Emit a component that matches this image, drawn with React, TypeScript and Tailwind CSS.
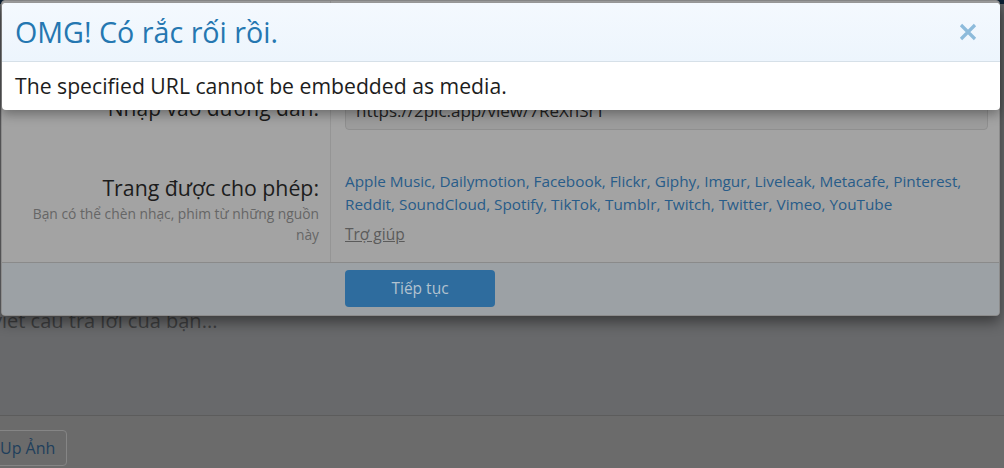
import React from 'react'

const sites = ['Apple Music', 'Dailymotion', 'Facebook', 'Flickr', 'Giphy', 'Imgur', 'Liveleak', 'Metacafe', 'Pinterest', 'Reddit', 'SoundCloud', 'Spotify', 'TikTok', 'Tumblr', 'Twitch', 'Twitter', 'Vimeo', 'YouTube']

export default function App() {
  return (
    <div className="relative w-[1004px] h-[468px] overflow-hidden bg-[#68696b] font-['Open_Sans',sans-serif]">
      {/* page behind overlay */}
      <div className="flex flex-col h-full">
        <div className="h-[4px] bg-[#0b1f33]" />
        <div className="h-[305px]" />
        <div className="h-[106px] text-[20px] text-[#3e3f40] leading-[24px] -ml-[8px]">viết câu trả lời của bạn...</div>
        <div className="flex-1 border-t border-[#5c5c5c] bg-[#6b6b6b] pt-[14px]">
          <button className="-ml-[12px] h-[36px] pl-[11px] pr-[11px] rounded-[4px] border border-[#858585] text-[16px] text-[#1f3f5c]">Up Ảnh</button>
        </div>
      </div>

      {/* dimmed editor modal */}
      <div className="absolute left-[1px] top-[0px] w-[999px] h-[316px] rounded-[4px] border border-[#8c8c8c] bg-[#a3a3a3] shadow-[0_6px_14px_rgba(0,0,0,0.45)] flex flex-col overflow-hidden">
        <div className="flex flex-1">
          <div className="w-[329px] border-r border-[#959595] flex flex-col items-end pr-[11px]">
            <div className="h-[93px]" />
            <div className="text-[21px] leading-[28px] text-[#1c1c1c]">Nhập vào đường dẫn:</div>
            <div className="h-[51px]" />
            <div className="text-[21.3px] leading-[30px] text-[#1c1c1c]">Trang được cho phép:</div>
            <div className="text-[13.8px] leading-[21px] text-[#666666] text-right w-[300px]">Bạn có thể chèn nhạc, phim từ những nguồn này</div>
          </div>
          <div className="flex-1 flex flex-col pl-[14px] pr-[11px]">
            <div className="h-[92px]" />
            <div className="h-[37px] rounded-[4px] border border-[#8f8f8f] bg-[#9c9c9c] px-[10px] text-[17px] leading-[34px] text-[#222]">https://2pic.app/view/7ReXhSrT</div>
            <div className="h-[40px]" />
            <div className="text-[15.3px] leading-[23px] text-[#285c89] pr-[10px]">
              {sites.map((s, i) => (
                <span key={s}>{s}{i < sites.length - 1 ? ', ' : ''}</span>
              ))}
            </div>
            <div className="mt-[8px] text-[15.5px] leading-[21px] text-[#5b5b5b] underline">Trợ giúp</div>
          </div>
        </div>
        <div className="h-[53px] border-t border-[#8a8a8a] bg-[#9ca1a5] flex pl-[343px] pt-[7px]">
          <button className="w-[150px] h-[37px] rounded-[4px] bg-[#2e6c9e] text-[15.5px] text-[#b2c2cf]">Tiếp tục</button>
        </div>
      </div>

      {/* error overlay */}
      <div className="absolute left-[2px] top-[3px] w-[998px] rounded-[4px] bg-white shadow-[0_4px_12px_rgba(0,0,0,0.35)] overflow-hidden">
        <div className="h-[59px] flex items-center justify-between pl-[13px] pr-[22px] bg-gradient-to-b from-[#f4f9fe] to-[#edf5fd] border-b border-[#d6e0e8]">
          <span className="text-[28.7px] text-[#2577b1] leading-[34px]">OMG! Có rắc rối rồi.</span>
          <svg width="20" height="20" viewBox="0 0 20 20">
            <path d="M3 3 L17 17 M17 3 L3 17" stroke="#8dbbdb" strokeWidth="3.2" strokeLinecap="butt" />
          </svg>
        </div>
        <div className="h-[48px] flex items-center pl-[13px] text-[21.2px] text-[#1d1d1d]">The specified URL cannot be embedded as media.</div>
      </div>
    </div>
  )
}
